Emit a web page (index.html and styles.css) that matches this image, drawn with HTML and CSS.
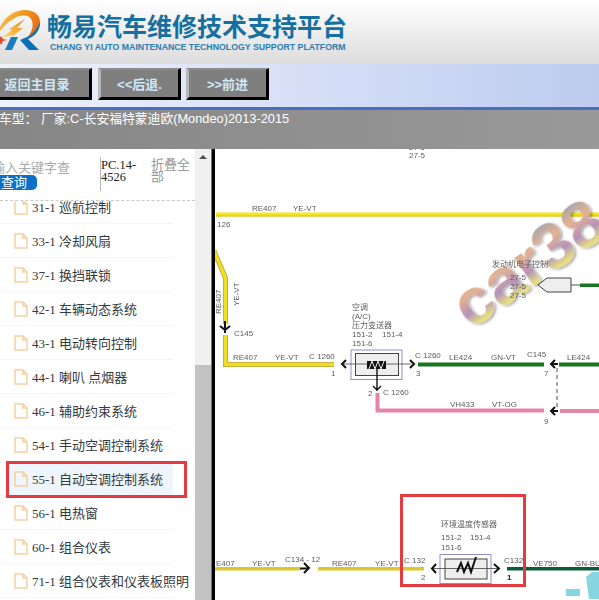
FILE: index.html
```html
<!DOCTYPE html>
<html lang="zh">
<head>
<meta charset="utf-8">
<title>畅易汽车维修技术支持平台</title>
<link rel="stylesheet" href="styles.css">
</head>
<body>
<div class="app">
  <header class="header">
    <svg class="logo" viewBox="0 0 44 44" width="44" height="44" aria-hidden="true">
      <defs>
        <linearGradient id="ring" x1="0" y1="0" x2="1" y2="0.4">
          <stop offset="0" stop-color="#f8d060"/>
          <stop offset="0.55" stop-color="#f09a1c"/>
          <stop offset="1" stop-color="#e8701a"/>
        </linearGradient>
        <linearGradient id="bolt" x1="1" y1="0" x2="0" y2="1">
          <stop offset="0" stop-color="#f0861c"/>
          <stop offset="1" stop-color="#fbd65a"/>
        </linearGradient>
      </defs>
      <path d="M0 24 C3 9 15 0 27 0 C37 0 43 6 42 14 C41 22 35 26 29 28 C33 23 36 17 34 11 C32 5 24 4 17 8 C9 12 4 18 0 24Z" fill="url(#ring)"/>
      <path d="M42 12 C42 21 37 26 30 29 L41 40 L31 40 L22 30 L29 27 C35 24 39 19 42 12Z" fill="#0f6fb4"/>
      <path d="M20 27 L14 40 L7 40 L13 27Z" fill="#1b7cc0"/>
      <path d="M27 9 L19 18 L25 18 L16 25 L5 27 L14 20 L11 19Z" fill="url(#bolt)"/>
      <path d="M3 26 L5 29 L9 30 L5 31 L3 35 L1 31 L-3 30 L1 29Z" fill="#e04a30"/>
    </svg>
    <div class="brand">
      <h1 class="brand-title">畅易汽车维修技术支持平台</h1>
      <p class="brand-sub">CHANG YI AUTO MAINTENANCE TECHNOLOGY SUPPORT PLATFORM</p>
    </div>
  </header>

  <nav class="nav">
    <a class="btn btn-home">返回主目录</a>
    <a class="btn">&lt;&lt;后退.</a>
    <a class="btn">&gt;&gt;前进</a>
  </nav>

  <div class="info">车型： 厂家:C-长安福特蒙迪欧(Mondeo)2013-2015</div>

  <main class="main">
    <aside class="side">
      <div class="side-body">
        <div class="search">
          <div class="search-box">
            <span class="search-hint">输入关键字查</span>
            <span class="search-btn">查询</span>
          </div>
          <div class="version">PC.14-4526</div>
          <div class="collapse">折叠全部</div>
        </div>
        <div class="list-wrap">
          <ul class="list">
            <li class="item"><div class="item-in"><svg class="doc" viewBox="0 0 14 16"><path d="M1 1H9L13 5V15H1Z M9 1V5H13"/></svg>31-1 巡航控制</div></li>
            <li class="item"><div class="item-in"><svg class="doc" viewBox="0 0 14 16"><path d="M1 1H9L13 5V15H1Z M9 1V5H13"/></svg>33-1 冷却风扇</div></li>
            <li class="item"><div class="item-in"><svg class="doc" viewBox="0 0 14 16"><path d="M1 1H9L13 5V15H1Z M9 1V5H13"/></svg>37-1 换挡联锁</div></li>
            <li class="item"><div class="item-in"><svg class="doc" viewBox="0 0 14 16"><path d="M1 1H9L13 5V15H1Z M9 1V5H13"/></svg>42-1 车辆动态系统</div></li>
            <li class="item"><div class="item-in"><svg class="doc" viewBox="0 0 14 16"><path d="M1 1H9L13 5V15H1Z M9 1V5H13"/></svg>43-1 电动转向控制</div></li>
            <li class="item"><div class="item-in"><svg class="doc" viewBox="0 0 14 16"><path d="M1 1H9L13 5V15H1Z M9 1V5H13"/></svg>44-1 喇叭 点烟器</div></li>
            <li class="item"><div class="item-in"><svg class="doc" viewBox="0 0 14 16"><path d="M1 1H9L13 5V15H1Z M9 1V5H13"/></svg>46-1 辅助约束系统</div></li>
            <li class="item"><div class="item-in"><svg class="doc" viewBox="0 0 14 16"><path d="M1 1H9L13 5V15H1Z M9 1V5H13"/></svg>54-1 手动空调控制系统</div></li>
            <li class="item item-active"><div class="item-in"><svg class="doc" viewBox="0 0 14 16"><path d="M1 1H9L13 5V15H1Z M9 1V5H13"/></svg>55-1 自动空调控制系统</div></li>
            <li class="item"><div class="item-in"><svg class="doc" viewBox="0 0 14 16"><path d="M1 1H9L13 5V15H1Z M9 1V5H13"/></svg>56-1 电热窗</div></li>
            <li class="item"><div class="item-in"><svg class="doc" viewBox="0 0 14 16"><path d="M1 1H9L13 5V15H1Z M9 1V5H13"/></svg>60-1 组合仪表</div></li>
            <li class="item"><div class="item-in"><svg class="doc" viewBox="0 0 14 16"><path d="M1 1H9L13 5V15H1Z M9 1V5H13"/></svg>71-1 组合仪表和仪表板照明</div></li>
          </ul>
        </div>
      </div>
      <div class="scrollbar">
        <span class="scroll-up"></span>
        <span class="scroll-thumb"></span>
      </div>
      <div class="mark mark-item"></div>
    </aside>

    <section class="diagram">
      <svg class="wiring" viewBox="215 150 384 450" width="384" height="450" role="img" aria-label="wiring diagram">
        <defs>
          <linearGradient id="wm" gradientUnits="userSpaceOnUse" x1="0" y1="-46" x2="0" y2="2">
            <stop offset="0" stop-color="#a9a7ab"/>
            <stop offset="0.32" stop-color="#e4b290"/>
            <stop offset="0.66" stop-color="#b592bc"/>
            <stop offset="0.92" stop-color="#e6de80"/>
          </linearGradient>
          <filter id="wmshadow" x="-10%" y="-10%" width="120%" height="120%">
            <feGaussianBlur in="SourceAlpha" stdDeviation="1.4"/>
            <feOffset dx="1" dy="2"/>
            <feComponentTransfer><feFuncA type="linear" slope="0.4"/></feComponentTransfer>
            <feMerge><feMergeNode/><feMergeNode in="SourceGraphic"/></feMerge>
          </filter>
        </defs>

        <!-- top yellow wire -->
        <rect x="216" y="213.500" width="383" height="4" fill="#f6e41c"/>
        <rect x="216" y="216.500" width="383" height="1" fill="#d8bc30"/>

        <!-- watermark -->
        <text class="wm" transform="translate(471 331) rotate(-35)" filter="url(#wmshadow)">car38</text>
        <path d="M566 590H580V597H566Z M586 578L592 573H599V600H589Z" fill="#86d6e2"/>

        <text class="t" x="409" y="151">27-5</text>
        <text class="t" x="409" y="159">27-5</text>
        <text class="t" x="252" y="212">RE407</text>
        <text class="t" x="293" y="212">YE-VT</text>
        <text class="t" x="217" y="228">126</text>

        <!-- left yellow wire -->
        <path d="M214 252L225.500 279V325" class="w-u"/>
        <path d="M225.500 336V365.500H334" class="w-u"/>
        <path d="M214 252L225.500 279V325" class="w-y"/>
        <path d="M225.500 336V365.500H334" class="w-y"/>
        <text class="t" transform="translate(221 315) rotate(-90)">RE407</text>
        <text class="t" transform="translate(239 307) rotate(-90)">YE-VT</text>
        <path d="M225 322V334M220 327L225 331L230 327" class="a"/>
        <text class="t" x="234" y="337">C145</text>
        <text class="t" x="233" y="361">RE407</text>
        <text class="t" x="275" y="361">YE-VT</text>
        <text class="t" x="309" y="360">C 1260</text>
        <text class="t" x="331" y="377">1</text>

        <!-- A/C pressure sensor -->
        <text class="t" x="352" y="311">空调</text>
        <text class="t" x="352" y="320">(A/C)</text>
        <text class="t" x="352" y="329">压力变送器</text>
        <text class="t" x="352" y="338">151-2</text>
        <text class="t" x="382" y="338">151-4</text>
        <text class="t" x="352" y="347">151-6</text>
        <rect x="351" y="351" width="51" height="29.500" class="box-o"/>
        <rect x="355.500" y="354.500" width="43" height="22" class="box-i"/>
        <path d="M343 365H411" class="thin"/>
        <rect x="367" y="362" width="19" height="8" fill="#111"/>
        <path d="M369 370L372 362L375 370L378 362L381 370L384 362" stroke="#eee" fill="none"/>
        <path d="M346 361L342 365L346 369M410 361L414 365L410 369" class="a"/>
        <path d="M377 370V392M373 387L377 391L381 387" class="a-thin"/>
        <text class="t" x="368" y="397">2</text>
        <text class="t" x="383" y="396">C 1260</text>
        <text class="t" x="415" y="359">C 1260</text>
        <text class="t" x="416" y="377">3</text>

        <!-- green wire -->
        <rect x="418" y="363.500" width="126" height="4" fill="#18751f"/>
        <text class="t" x="449" y="361">LE424</text>
        <text class="t" x="491" y="361">GN-VT</text>
        <text class="t" x="527" y="358">C145</text>
        <text class="t" x="544" y="377">7</text>
        <path d="M555 361L551 365L555 369M551 365H558" class="a"/>
        <rect x="559" y="363.500" width="40" height="4" fill="#18751f"/>
        <text class="t" x="567" y="361">LE424</text>
        <path d="M557 369V408" class="dash"/>

        <!-- pink wire -->
        <path d="M377.500 394V411.500H544" class="w-p"/>
        <text class="t" x="450" y="408">VH433</text>
        <text class="t" x="492" y="408">VT-OG</text>
        <text class="t" x="544" y="425">9</text>
        <path d="M555 408L551 412L555 416M551 412H558" class="a"/>
        <rect x="560" y="410" width="39" height="4" fill="#e484aa"/>

        <!-- small connector -->
        <text class="t" x="492" y="268">发动机电子控制</text>
        <text class="t" x="510" y="281">27-5</text>
        <text class="t" x="510" y="290">27-5</text>
        <text class="t" x="510" y="299">27-5</text>
        <path d="M538 286L547 279H571V293H547Z" class="pent"/>
        <path d="M571 286H580" class="thin-g"/>
        <rect x="580" y="284.500" width="19" height="3.500" fill="#18751f"/>

        <!-- bottom wire -->
        <rect x="215" y="568" width="85" height="3.500" fill="#dcc82c"/>
        <path d="M304 564L309 569L304 574M300 569.500H309" class="a"/>
        <rect x="318" y="568" width="106" height="3.500" fill="#dcc82c"/>
        <text class="t" x="216" y="567">E407</text>
        <text class="t" x="252" y="567">YE-VT</text>
        <text class="t" x="285" y="563">C134 - 12</text>
        <text class="t" x="332" y="567">RE407</text>
        <text class="t" x="375" y="567">YE-VT</text>
        <text class="t" x="404" y="564">C 132</text>
        <text class="t" x="421" y="581">2</text>

        <text class="t" x="441" y="528">环境温度传感器</text>
        <text class="t" x="441" y="541">151-2</text>
        <text class="t" x="470" y="541">151-4</text>
        <text class="t" x="441" y="551">151-6</text>
        <rect x="440" y="555.500" width="51" height="29" class="box-o"/>
        <rect x="445" y="560" width="42" height="20" class="box-i"/>
        <path d="M433 569.500H499" class="thin"/>
        <path d="M457 573L461 564L464 573L468 564L471 573L474 564L476 558" stroke="#111" stroke-width="2" fill="none"/>
        <path d="M436 565L432 569.500L436 574M494 565L499 569.500L494 574" class="a"/>
        <text class="t" x="504" y="564">C132</text>
        <text class="t t-b" x="507" y="581">1</text>
        <rect x="507" y="568" width="92" height="3.500" fill="#0c5c3c"/>
        <text class="t" x="533" y="567">VE750</text>
        <text class="t" x="575" y="567">GN-BU</text>

        <rect x="401.500" y="496.500" width="123" height="90" class="mark-svg"/>
      </svg>
    </section>
  </main>
</div>
</body>
</html>
```

FILE: styles.css
```css
* { box-sizing: border-box; }
html, body { margin: 0; padding: 0; }
body {
  width: 599px;
  height: 600px;
  overflow: hidden;
  background: #fff;
  font-family: "Liberation Sans", "Noto Sans CJK SC", sans-serif;
}
.app { display: flex; flex-direction: column; height: 600px; }

/* header */
.header {
  height: 64px;
  flex: none;
  display: flex;
  align-items: flex-start;
  gap: 5px;
  padding-top: 10px;
  background: linear-gradient(#ffffff, #dcdcdc);
}
.logo { margin-left: -2px; flex: none; }
.brand { padding-top: 1px; }
.brand-title {
  margin: 0;
  font-size: 25px;
  line-height: 29px;
  font-weight: 700;
  color: #15709f;
  font-family: "Noto Sans CJK SC", sans-serif;
  white-space: nowrap;
}
.brand-sub {
  margin: 2px 0 0 3px;
  font-size: 8.75px;
  line-height: 11px;
  font-weight: 700;
  color: #2b7eb4;
  white-space: nowrap;
}

/* nav */
.nav {
  height: 43px;
  flex: none;
  display: flex;
  gap: 5px;
  padding-top: 4px;
  margin-left: -18px;
  background: linear-gradient(90deg, #f0f3fb, #d2dcf6 60%, #bccbee);
}
.btn {
  display: flex;
  align-items: center;
  justify-content: center;
  width: 83px;
  height: 32px;
  background: #7f7f7f;
  border-style: solid;
  border-width: 2px 3px 3px 3px;
  border-color: #8c8c8c #000 #000 #b8b8b8;
  color: #cfe8f7;
  font-size: 13px;
  font-weight: 700;
  font-family: "Liberation Sans", "Noto Sans CJK SC", sans-serif;
}
.btn-home { width: 110px; margin-right: 1px; }

/* info bar */
.info {
  height: 42px;
  flex: none;
  border-top: 3px solid #4a6ec2;
  text-indent: -1px;
  background: linear-gradient(90deg, #868686, #999999);
  color: #fff;
  font-size: 12.8px;
  line-height: 17px;
  white-space: nowrap;
}

/* main */
.main { flex: 1; min-height: 0; display: flex; }
.side {
  position: relative;
  flex: none;
  width: 215px;
  display: flex;
  border-right: 3px solid #000;
  box-shadow: inset -1px 0 0 #777;
}
.side-body { width: 195px; flex: none; display: flex; flex-direction: column; min-height: 0; }

.search {
  height: 52px;
  flex: none;
  display: flex;
  border-bottom: 1px dashed #c8c8c8;
  padding-top: 8px;
}
.search-box { width: 100px; flex: none; overflow: hidden; }
.search-hint {
  display: block;
  margin-left: -8px;
  height: 18px;
  color: #aaa;
  font-size: 13px;
  line-height: 22px;
  white-space: nowrap;
}
.search-btn {
  display: block;
  width: 37px;
  height: 15px;
  padding-left: 1px;
  background: #0a70c8;
  border-radius: 0 5px 5px 0;
  color: #fff;
  font-size: 13px;
  line-height: 15px;
}
.version {
  width: 51px;
  height: 34px;
  flex: none;
  padding: 2px 8px 0 0;
  border-left: 1px solid #bbb;
  color: #222;
  font-family: "Liberation Serif", serif;
  font-size: 12.5px;
  line-height: 12px;
}
.collapse {
  width: 39px;
  flex: none;
  padding-top: 2px;
  color: #999;
  font-size: 13px;
  line-height: 12px;
}

.list-wrap { flex: 1; min-height: 0; overflow: hidden; }
.list { list-style: none; margin: -11px 0 0; padding: 0; width: 173px; }
.item { height: 34px; border-bottom: 1px solid #f6f6f6; }
.item-in {
  height: 33px;
  margin-left: 7px;
  padding-left: 7px;
  display: flex;
  align-items: center;
  gap: 4px;
  color: #333a40;
  font-family: "Liberation Serif", "Noto Sans CJK SC", serif;
  font-size: 13px;
  white-space: nowrap;
}
.item-active .item-in { background: #eef5fd; }
.doc { width: 14px; height: 16px; flex: none; }
.doc path { fill: none; stroke: #f6cfa0; stroke-width: 1.500; }

/* scrollbar */
.scrollbar {
  width: 16px;
  flex: none;
  display: flex;
  flex-direction: column;
  align-items: center;
  background: #f0f0f0;
}
.scroll-up {
  width: 0;
  height: 0;
  margin-top: 6px;
  border-left: 4px solid transparent;
  border-right: 4px solid transparent;
  border-bottom: 4px solid #505050;
}
.scroll-thumb {
  align-self: stretch;
  margin-top: 206px;
  flex: 1;
  background: #c2c2c2;
}

/* annotations */
.mark {
  position: absolute;
  border: 3px solid #e33b3f;
}
.mark-item { left: 6px; top: 312px; width: 181px; height: 37px; }

/* wiring */
.diagram { flex: 1; min-width: 0; overflow: hidden; }
.wiring { display: block; filter: blur(0.45px); }
.t {
  font-family: "Liberation Sans", "Noto Sans CJK SC", sans-serif;
  font-size: 8px;
  fill: #5c5c5c;
}
.t-b { font-weight: 700; fill: #222; }
.wm {
  font-family: "Liberation Sans", sans-serif;
  font-size: 65px;
  font-weight: 700;
  fill: url(#wm);
}
.w-u { fill: none; stroke: #b3a348; stroke-width: 5; }
.w-y { fill: none; stroke: #f2de20; stroke-width: 3.500; }
.w-p { fill: none; stroke: #e484aa; stroke-width: 4; }
.thin { fill: none; stroke: #444; stroke-width: 0.8; }
.thin-g { fill: none; stroke: #555; stroke-width: 1; }
.a { fill: none; stroke: #111; stroke-width: 2; }
.a-thin { fill: none; stroke: #111; stroke-width: 1.400; }
.dash { fill: none; stroke: #888; stroke-width: 1.500; stroke-dasharray: 4 3; }
.box-o { fill: #fff; stroke: #8e8ecb; stroke-width: 1; }
.box-i { fill: #eee; stroke: #444; stroke-width: 1; }
.pent { fill: #eee; stroke: #444; stroke-width: 1; }
.mark-svg { fill: none; stroke: #e33b3f; stroke-width: 3; }
```
